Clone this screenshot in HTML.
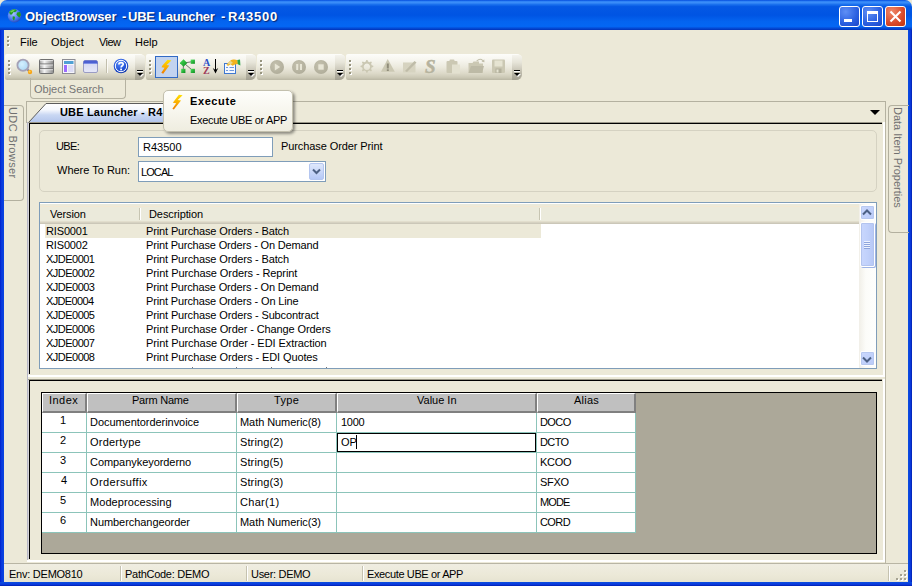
<!DOCTYPE html>
<html><head><meta charset="utf-8">
<style>
*{box-sizing:border-box;margin:0;padding:0}
html,body{width:912px;height:586px;overflow:hidden;background:#ece9d8;font-family:"Liberation Sans",sans-serif;font-size:11px;line-height:13px;color:#000}
#win{position:absolute;left:0;top:0;width:912px;height:586px;background:#ece9d8;overflow:hidden}
#win div,#win span,#win svg{position:absolute}
#title{left:0;top:0;width:912px;height:30px;background:linear-gradient(#0046da 0%,#2d80f5 4%,#3c8ef9 9%,#1a70ee 15%,#0558e4 22%,#0054e3 50%,#0464f0 72%,#0467f4 88%,#0450dc 93%,#0232b8 100%);border-radius:7px 7px 0 0}
#title .txt{left:25px;top:9px;font-weight:bold;font-size:13px;line-height:15px;color:#fff;text-shadow:1px 1px 1px #0a246a;white-space:nowrap}
.bl{left:0;top:30px;width:4px;height:556px;background:linear-gradient(90deg,#0020cc,#0838dc 35%,#0a45e2 100%)}
.br{left:908px;top:30px;width:4px;height:556px;background:linear-gradient(90deg,#0a4fe0,#0b3edc 50%,#0831d9 75%,#001ea0)}
.bb{left:0;top:582px;width:912px;height:4px;background:linear-gradient(#0a4fe0,#0b3edc 50%,#0831d9 75%,#001ea0)}
.cb{top:6px;width:21px;height:21px;border:1px solid #fff;border-radius:3px;background:radial-gradient(circle at 30% 25%,#5f8ff5,#2a5fe0 60%,#1c46c8)}
.cb.x{background:radial-gradient(circle at 30% 25%,#f0896a,#d8492a 60%,#c0350f)}
.menu span{top:36px;font-size:11px}
.tb{top:54px;height:26px;background:linear-gradient(#fdfdfa 0%,#f6f5ee 25%,#eceade 50%,#dcd9c8 75%,#ccc9b6 90%,#b9b6a3 100%);border-radius:2px 5px 5px 2px}
.grip{top:60px;width:3px;height:16px;background:linear-gradient(#8f8c7a,#8f8c7a) 0 0/2px 2px,linear-gradient(#fff,#fff) 1px 1px/2px 2px;background-repeat:repeat-y;background-size:2px 2px,2px 2px;background:none}
.grip:before{content:"";position:absolute;left:1px;top:1px;width:2px;height:100%;background:repeating-linear-gradient(#fff 0,#fff 2px,transparent 2px,transparent 4px)}
.grip:after{content:"";position:absolute;left:0;top:0;width:2px;height:100%;background:repeating-linear-gradient(#97947f 0,#97947f 2px,transparent 2px,transparent 4px)}
.ovf{top:55px;width:10px;height:25px;background:linear-gradient(#f5f4ee 0%,#e6e4d8 30%,#cfccbe 55%,#b3b0a1 80%,#a29f90 100%);border-radius:0 3px 6px 0}
.ovf:before{content:"";position:absolute;left:2px;top:15px;width:6px;height:2px;background:linear-gradient(#000 50%,#fff 50%)}
.ovf:after{content:"";position:absolute;left:2px;top:18px;border:3px solid transparent;border-top:3px solid #000;border-bottom:0;filter:drop-shadow(1px 1px 0 #fff)}
.lr{left:41px;width:500px;height:14px;white-space:nowrap}
.lr span{top:0;line-height:14px}
.lr .v{left:5px}.lr .d{left:105px}
.gr{left:42px;width:594px;height:20px}
.c{top:0;height:20px;background:#fff;border-right:1px solid #8cc4ba;border-bottom:1px solid #8cc4ba;line-height:19px;white-space:nowrap;padding-left:3px;font-size:11px}
.c0{left:0;width:45px;text-align:center;padding:0;line-height:17px}.c1{left:45px;width:150px}.c2{left:195px;width:100px}.c3{left:295px;width:200px}.c4{left:495px;width:99px}
.gh{top:393px;height:20px;background:#c0c0c0;border-top:1px solid #fff;border-left:1px solid #fff;border-right:2px solid #808080;border-bottom:2px solid #808080}
.st{top:568px;font-size:11px;line-height:13px;white-space:nowrap}
.vt{font-size:11px;color:#707070;white-space:nowrap;transform-origin:0 0;transform:rotate(90deg);line-height:13px}
.t{white-space:nowrap;font-size:11px;line-height:13px}
.ss{top:566px;width:2px;height:15px;background:linear-gradient(90deg,#c5c2b0 50%,#fff 50%)}
.sbb{width:15px;height:15px;border-radius:2px;background:linear-gradient(135deg,#cbd9fe,#b9caf8);border:1px solid #fff;box-shadow:0 0 0 1px #b7c8f0 inset}
</style></head><body>
<div id="win">
<div id="title">
<div class="cb" style="left:839px"><div style="left:4px;top:12px;width:8px;height:3px;background:#fff"></div></div>
<div class="cb" style="left:862px"><div style="left:4px;top:4px;width:11px;height:11px;border:1px solid #fff;border-top:3px solid #fff"></div></div>
<div class="cb x" style="left:885px"><svg style="left:3px;top:3px" width="13" height="13" viewBox="0 0 13 13"><path d="M1.500 1.500 L11.500 11.500 M11.500 1.500 L1.500 11.500" stroke="#fff" stroke-width="2.100"/></svg></div>
</div>
<div class="bl"></div><div class="br"></div><div class="bb"></div>
<div class="menu"><div class="grip" style="left:7px;top:36px;height:12px"></div></div>
<!-- toolbars -->
<div class="tb" style="left:5px;width:140px"></div><div class="grip" style="left:8px"></div><div class="ovf" style="left:135px"></div>
<div class="tb" style="left:146px;width:110px"></div><div class="grip" style="left:149px"></div><div class="ovf" style="left:246px"></div>
<div class="tb" style="left:257px;width:88px"></div><div class="grip" style="left:260px"></div><div class="ovf" style="left:335px"></div>
<div class="tb" style="left:346px;width:176px"></div><div class="grip" style="left:349px"></div><div class="ovf" style="left:512px"></div>
<!-- globe -->
<svg style="left:7px;top:8px" width="16" height="16" viewBox="0 0 16 16"><defs><radialGradient id="gl" cx="0.4" cy="0.35" r="0.7"><stop offset="0" stop-color="#a9c4ff"/><stop offset="0.6" stop-color="#4d7df0"/><stop offset="1" stop-color="#1f45b8"/></radialGradient></defs><circle cx="7.5" cy="7.7" r="6.8" fill="url(#gl)"/><path d="M2.2 4.2 C3.5 1.6 6.5 0.9 8.6 1.5 L10 2.8 L8.2 4 L6.2 4.3 L5 6.4 L3 6.6Z M10.2 4.6 L13 4 L14 7 L12.5 9.5 L10.8 8.2 L9.4 6.5Z M5.8 8.2 L8 8.8 L7.6 11.5 L6.6 12.6 L5.6 10.6Z" fill="#1f9a1f"/><path d="M3 4 C4 2.2 6.5 1.5 8 1.8 L6.5 3.4 L4.4 4.6Z" fill="#7fd86a" opacity=".8"/></svg>
<!-- magnifier -->
<svg style="left:15px;top:57px" width="19" height="18" viewBox="0 0 19 18"><defs><radialGradient id="mg" cx="0.4" cy="0.4" r="0.7"><stop offset="0" stop-color="#d4f0ff"/><stop offset="1" stop-color="#a8d4f2"/></radialGradient></defs><path d="M11.5 11.5 L14.5 14.5" stroke="#8a88a0" stroke-width="2.2"/><circle cx="8" cy="8.2" r="5.6" fill="url(#mg)" stroke="#a4a1b6" stroke-width="1.8"/><circle cx="15" cy="15" r="2.2" fill="#f7a416"/><circle cx="14.6" cy="14.5" r="1" fill="#ffd050"/></svg>
<!-- database -->
<svg style="left:39px;top:59px" width="16" height="15" viewBox="0 0 16 15"><defs><linearGradient id="db" x1="0" x2="1" y1="0" y2="0"><stop offset="0" stop-color="#9a9a9a"/><stop offset="0.35" stop-color="#f4f4f4"/><stop offset="0.6" stop-color="#c8c8c8"/><stop offset="1" stop-color="#8a8a8a"/></linearGradient></defs><rect x="0.5" y="0.5" width="14" height="14" rx="1" fill="url(#db)" stroke="#707070"/><path d="M1 5 H14 M1 9.7 H14" stroke="#6e6e6e" stroke-width="1"/><path d="M1 1.6 H14 M1 6 H14 M1 10.7 H14" stroke="#fafafa" stroke-width="1" opacity=".7"/></svg>
<!-- form -->
<svg style="left:62px;top:59px" width="14" height="15" viewBox="0 0 14 15"><rect x="0.5" y="0.5" width="12.5" height="14" fill="#f6f6fb" stroke="#8c8c94"/><rect x="2" y="2" width="9.5" height="3" fill="#4fa0d4"/><rect x="2" y="6" width="3" height="7" fill="#9b6bff"/><rect x="6" y="6" width="5.5" height="7" fill="#dcdcf6"/></svg>
<!-- window -->
<svg style="left:83px;top:60px" width="16" height="13" viewBox="0 0 16 13"><defs><linearGradient id="wn" x1="0" x2="0" y1="0" y2="1"><stop offset="0" stop-color="#d0d4f2"/><stop offset="1" stop-color="#e6e8f8"/></linearGradient></defs><rect x="0.5" y="0.5" width="14" height="12" rx="1.5" fill="url(#wn)" stroke="#9a9cc4"/><path d="M0.5 4 V2 Q0.5 0.5 2 0.5 H13 Q14.5 0.5 14.5 2 V4Z" fill="#4c60d2"/><path d="M1 3.5 H14" stroke="#7c8ee6" stroke-width="1"/></svg>
<div style="left:106px;top:59px;width:1px;height:14px;background:#c2bfad"></div><div style="left:107px;top:59px;width:1px;height:14px;background:#fbfaf6"></div>
<!-- help -->
<svg style="left:113px;top:58px" width="16" height="16" viewBox="0 0 16 16"><defs><radialGradient id="hp" cx="0.4" cy="0.3" r="0.8"><stop offset="0" stop-color="#5a8cf8"/><stop offset="0.6" stop-color="#1f4fd6"/><stop offset="1" stop-color="#12349c"/></radialGradient></defs><circle cx="8" cy="8" r="7.3" fill="url(#hp)"/><circle cx="8" cy="8" r="5.7" fill="none" stroke="#fff" stroke-width="1"/><path d="M5.9 6.4 C5.9 4.2 10.2 4.1 10.2 6.3 C10.2 7.8 8.1 7.7 8.1 9.6" fill="none" stroke="#fff" stroke-width="1.7"/><rect x="7.2" y="10.6" width="1.8" height="1.7" fill="#fff"/></svg>
<!-- execute selected -->
<div style="left:155px;top:56px;width:23px;height:22px;background:#c2d3ef;border:1px solid #316ac5"></div>
<svg style="left:160px;top:59px" width="13" height="16" viewBox="0 0 13 16"><defs><linearGradient id="lt" x1="0" x2="0" y1="0" y2="1"><stop offset="0" stop-color="#ffe000"/><stop offset="0.5" stop-color="#fbb000"/><stop offset="1" stop-color="#ee7a00"/></linearGradient></defs><path d="M7.600 0.800 L11.400 1.400 L6.600 6 L9.300 6.600 L3.200 14.800 L1.300 13.800 L4.600 8.800 L1.500 8.200 L2.400 6.600 Z" fill="url(#lt)"/></svg>
<!-- tree -->
<svg style="left:180px;top:58px" width="17" height="17" viewBox="0 0 17 17"><defs><linearGradient id="gr" x1="0" y1="0" x2="1" y2="1"><stop offset="0" stop-color="#4be25a"/><stop offset="1" stop-color="#0c8a1e"/></linearGradient></defs><path d="M4 5 L12.500 3.600 M3.500 5 L3.200 13 M5 6 L11.500 11.500" stroke="#707070" stroke-width="1"/><path d="M3.500 1.200 L7.300 5 L3.500 8.800 L-0.300 5Z" fill="url(#gr)"/><rect x="10.700" y="1.600" width="4.200" height="4.200" fill="url(#gr)"/><rect x="1.200" y="10.800" width="4.200" height="4.200" fill="url(#gr)"/><rect x="10.700" y="10.800" width="4.200" height="4.200" fill="url(#gr)"/></svg>
<!-- sort AZ -->
<span style="left:203px;top:58px;font-family:'Liberation Serif',serif;font-weight:bold;font-size:10px;line-height:10px;color:#2a50c8">A</span>
<span style="left:203px;top:66px;font-family:'Liberation Serif',serif;font-weight:bold;font-size:10px;line-height:10px;color:#a03a5a">Z</span>
<svg style="left:212px;top:58px" width="8" height="17" viewBox="0 0 8 17"><path d="M3.5 1 V12" stroke="#000" stroke-width="1"/><path d="M0.8 10 L3.5 15.5 L6.2 10 L3.5 12Z" fill="#000"/></svg>
<!-- properties -->
<svg style="left:223px;top:58px" width="19" height="17" viewBox="0 0 19 17"><rect x="1.5" y="5.5" width="11" height="10" fill="#f4f8ff" stroke="#3f78d0"/><path d="M3 9.5 H5 M6.5 9.5 H11 M3 12.5 H5 M6.5 12.5 H11" stroke="#6f98dc" stroke-width="1.2"/><path d="M3.5 6.5 L7.5 2.5 C9 1.5 12 1.2 14.5 2.2 L15 6 L12 6.6 L9.5 7.8 L7.6 6.2 L5 8Z" fill="#f2b21a"/><path d="M4 6.4 L7.6 2.8 L10 5 L7.8 6Z" fill="#e8d890"/><path d="M14.3 2 L17 1.4 L17.4 7.6 L14.8 6.2Z" fill="#2fa84a"/></svg>
<!-- disabled play/pause/stop -->
<svg style="left:269px;top:59px" width="60" height="16" viewBox="0 0 60 16"><defs><radialGradient id="dg" cx="0.4" cy="0.35" r="0.75"><stop offset="0" stop-color="#c4c1ae"/><stop offset="1" stop-color="#aeab98"/></radialGradient></defs><circle cx="8" cy="8" r="7" fill="url(#dg)"/><circle cx="30" cy="8" r="7" fill="url(#dg)"/><circle cx="52" cy="8" r="7" fill="url(#dg)"/><path d="M5.8 4.6 L11.2 8 L5.8 11.4Z" fill="#e8e6d6"/><rect x="27.2" y="5" width="2" height="6" fill="#e8e6d6"/><rect x="31" y="5" width="2" height="6" fill="#e8e6d6"/><rect x="49.3" y="5.3" width="5.4" height="5.4" fill="#e8e6d6"/></svg>
<!-- disabled toolbar 4 -->
<svg style="left:358px;top:58px" width="150" height="17" viewBox="0 0 150 17"><g fill="#cbc8b3">
<path d="M8.3 2 l1.2 0 l.5 1.6 l1.5 .6 l1.5 -.8 l.9 .9 l-.8 1.5 l.6 1.5 l1.6 .5 v1.2 l-1.6 .5 l-.6 1.5 l.8 1.5 l-.9 .9 l-1.5 -.8 l-1.5 .6 l-.5 1.6 h-1.2 l-.5 -1.6 l-1.5 -.6 l-1.5 .8 l-.9 -.9 l.8 -1.5 l-.6 -1.5 l-1.6 -.5 v-1.2 l1.6 -.5 l.6 -1.5 l-.8 -1.5 l.9 -.9 l1.5 .8 l1.5 -.6Z M8.9 5.6 a3.2 3.2 0 1 0 .01 0Z" fill-rule="evenodd"/>
<path d="M29.7 1 L36.8 13.8 H23Z"/>
<rect x="45" y="4.5" width="12.5" height="10" fill="#d6d3c0"/><path d="M47 13 L56.5 3 L58.5 4.5 L49 14Z" fill="#bfbca8"/>
<rect x="88.500" y="3" width="11" height="12" rx="1"/><rect x="91.500" y="1.600" width="5" height="2.500" rx="1"/><rect x="94" y="6.500" width="8" height="9" fill="#e3e1d0"/>
<path d="M110.500 5 h4 l1 -1.500 h5.500 v2 h4 v9.500 h-14.500Z"/><path d="M113 8 h13 l-2 7 h-13.500Z" fill="#bdbaa6"/><path d="M119 3.500 q3 -3 5.500 -.5 l-1 .8 3 .5 -.3 -3 -.9 .9 q-3.500 -3 -7 .6Z" fill="#c2bfab"/>
<rect x="134" y="1.500" width="13" height="13.500" rx="1"/><rect x="136.500" y="2.500" width="8" height="6" fill="#e6e4d2"/><rect x="137.500" y="10.500" width="6" height="4.500" fill="#b3b09c"/><rect x="138.500" y="11.500" width="2" height="3" fill="#e6e4d2"/>
</g><rect x="28.800" y="5.500" width="2" height="5" fill="#8f8c79"/><rect x="28.800" y="11.300" width="2" height="1.700" fill="#8f8c79"/>
<text x="67" y="14.800" font-family="Liberation Serif" font-weight="bold" font-style="italic" font-size="19" fill="#b6b39e" stroke="#b6b39e" stroke-width=".5">S</text></svg>
<!-- tooltip icon drawn later -->

<!-- object search -->
<div style="left:30px;top:78px;width:96px;height:21px;border:1px solid #b5b2a1;border-top:0;border-radius:0 0 4px 4px"></div>

<!-- side tabs -->
<div style="left:4px;top:105px;width:20px;height:96px;border:1px solid #b3b09f;border-left:0;border-radius:0 4px 4px 0"></div>
<div class="vt" style="left:19px;top:107px;letter-spacing:.4px">UDC Browser</div>
<div style="left:888px;top:105px;width:21px;height:128px;border:1px solid #b3b09f;border-right:0;border-radius:4px 0 0 4px"></div>
<div class="vt" style="left:904px;top:107px">Data Item Properties</div>
<!-- upper panel -->
<div style="left:26px;top:101px;width:860px;height:22px;border:1px solid #b4b1a0;border-bottom:0"></div>
<div style="left:885px;top:122px;width:1px;height:441px;background:#b9b6a5"></div>
<div style="left:883px;top:122px;width:2px;height:255px;background:#fff"></div><div style="left:27px;top:375px;width:858px;height:2px;background:#fff"></div>
<div style="left:27px;top:122px;width:1px;height:438px;background:#b6b6c6"></div>
<div style="left:28px;top:122px;width:854px;height:252px;border-left:2px solid #000;border-top:2px solid #000;border-left-color:#6d6d6d #000;"></div>
<div style="left:28px;top:122px;width:854px;height:1px;background:#9a9788"></div><div style="left:28px;top:123px;width:1px;height:251px;background:#d6d5d8"></div>
<svg style="left:28px;top:102px" width="140" height="21"><defs><linearGradient id="tg" x1="0" y1="0" x2="0" y2="1"><stop offset="0" stop-color="#fff"/><stop offset="0.35" stop-color="#f4f7fd"/><stop offset="0.62" stop-color="#c9d7f3"/><stop offset="1" stop-color="#b4c6ec"/></linearGradient></defs><path d="M1 20 L18 1.5 L140 1.5 L140 20Z" fill="url(#tg)"/><path d="M1 20 L18 1.5 L140 1.5" fill="none" stroke="#5c5c5c" stroke-width="1"/></svg>

<div style="left:870px;top:110px;border:5px solid transparent;border-top:5px solid #000;border-bottom:0"></div>
<!-- group box -->
<div style="left:39px;top:130px;width:838px;height:62px;border:1px solid #d5d2c2;border-radius:5px"></div>

<div style="left:138px;top:137px;width:135px;height:20px;background:#fff;border:1px solid #7f9db9"></div>



<div style="left:138px;top:161px;width:188px;height:21px;background:#fff;border:1px solid #7f9db9"></div>

<div style="left:309px;top:163px;width:15px;height:17px;border-radius:2px;background:linear-gradient(#dfe8fc,#b5c8f6);border:1px solid #b4c6f0"></div>
<svg style="left:312px;top:168px" width="9" height="7"><path d="M1 1.5 L4.5 5 L8 1.5" fill="none" stroke="#4d6185" stroke-width="2"/></svg>
<!-- list -->
<div style="left:39px;top:202px;width:838px;height:167px;background:#fff;border:1px solid #7f9db9;overflow:hidden"></div>
<div style="left:40px;top:203px;width:819px;height:21px;background:linear-gradient(#fff 0,#fff 1px,#ebeadb 1px,#ebeadb 18px,#e2decd 18px,#e2decd 19px,#d6d2c2 19px,#d6d2c2 20px,#cbc7b8 20px)"></div>
<!-- peach --><div style="left:40px;top:206px;width:819px;height:1px;background:#f3e8d2"></div>
<div style="left:139px;top:208px;width:1px;height:12px;background:#c7c5b2"></div><div style="left:140px;top:208px;width:1px;height:12px;background:#fff"></div>
<div style="left:539px;top:208px;width:1px;height:12px;background:#c7c5b2"></div><div style="left:540px;top:208px;width:1px;height:12px;background:#fff"></div>

<div style="left:45px;top:224px;width:496px;height:14px;background:#ece9d8"></div>
<!-- partial --><div style="left:192px;top:367px;width:1px;height:1px;background:#777"></div><div style="left:236px;top:367px;width:1px;height:1px;background:#777"></div><div style="left:271px;top:367px;width:1px;height:1px;background:#777"></div><div style="left:326px;top:367px;width:1px;height:1px;background:#777"></div>
<!-- list scrollbar -->
<div style="left:859px;top:204px;width:17px;height:164px;background:linear-gradient(90deg,#f1efe8,#fcfcf9 40%,#fefefd)"></div>
<div class="sbb" style="left:860px;top:205px"></div><div class="sbb" style="left:860px;top:351px"></div>
<svg style="left:862px;top:209px" width="10" height="7" viewBox="0 0 10 7"><path d="M1 5.500 L5 1.500 L9 5.500" fill="none" stroke="#4d6185" stroke-width="2"/></svg>
<svg style="left:862px;top:356px" width="10" height="7" viewBox="0 0 10 7"><path d="M1 1.500 L5 5.500 L9 1.500" fill="none" stroke="#4d6185" stroke-width="2"/></svg>
<div style="left:860px;top:222px;width:15px;height:45px;border-radius:2px;background:linear-gradient(90deg,#c9d7fd,#c1d1fb 50%,#b6c7f5);border:1px solid #fff;box-shadow:0 0 0 1px #b3c4ee inset, 1px 1px 0 #9db3e6"></div>
<div style="left:864px;top:241px;width:6px;height:8px;background:repeating-linear-gradient(#eef3fe 0,#eef3fe 1px,#8ea5dc 1px,#8ea5dc 2px)"></div>
<!-- splitter + lower panel -->
<div style="left:883px;top:379px;width:2px;height:183px;background:#fff"></div><div style="left:27px;top:560px;width:858px;height:2px;background:#fff"></div>
<div style="left:28px;top:379px;width:854px;height:180px;border-left:2px solid #000;border-top:2px solid #000"></div>
<div style="left:28px;top:379px;width:854px;height:1px;background:#9a9788"></div><div style="left:28px;top:380px;width:1px;height:179px;background:#d6d5d8"></div>
<div style="left:41px;top:392px;width:836px;height:162px;background:#aca899;border:1px solid #000"></div>
<div class="gh" style="left:42px;width:45px"></div><div class="gh" style="left:87px;width:150px"></div><div class="gh" style="left:237px;width:100px"></div><div class="gh" style="left:337px;width:200px"></div><div class="gh" style="left:537px;width:99px"></div>
<div class="gr" style="top:413px"><div class="c c0"></div><div class="c c1"></div><div class="c c2"></div><div class="c c3"></div><div class="c c4"></div></div>
<div class="gr" style="top:433px"><div class="c c0"></div><div class="c c1"></div><div class="c c2"></div><div class="c c3"></div><div class="c c4"></div></div>
<div class="gr" style="top:453px"><div class="c c0"></div><div class="c c1"></div><div class="c c2"></div><div class="c c3"></div><div class="c c4"></div></div>
<div class="gr" style="top:473px"><div class="c c0"></div><div class="c c1"></div><div class="c c2"></div><div class="c c3"></div><div class="c c4"></div></div>
<div class="gr" style="top:493px"><div class="c c0"></div><div class="c c1"></div><div class="c c2"></div><div class="c c3"></div><div class="c c4"></div></div>
<div class="gr" style="top:513px"><div class="c c0"></div><div class="c c1"></div><div class="c c2"></div><div class="c c3"></div><div class="c c4"></div></div>

<div style="left:337px;top:433px;width:199px;height:19px;border:1px solid #000;background:#fff"></div>
<div style="left:356px;top:435px;width:1px;height:14px;background:#000"></div>
<!-- status -->
<div style="left:4px;top:563px;width:904px;height:1px;background:#b8b5a4"></div>
<div style="left:4px;top:564px;width:904px;height:18px;background:linear-gradient(#efede1,#ece9d8 60%,#e6e3d1)"></div>

<div class="ss" style="left:120px"></div><div class="ss" style="left:246px"></div><div class="ss" style="left:362px"></div><div class="ss" style="left:888px"></div>
<svg style="left:895px;top:569px" width="12" height="12" viewBox="0 0 12 12"><g fill="#fff"><rect x="10" y="2" width="2" height="2"/><rect x="6" y="6" width="2" height="2"/><rect x="10" y="6" width="2" height="2"/><rect x="2" y="10" width="2" height="2"/><rect x="6" y="10" width="2" height="2"/><rect x="10" y="10" width="2" height="2"/></g><g fill="#a5a291"><rect x="9" y="1" width="2" height="2"/><rect x="5" y="5" width="2" height="2"/><rect x="9" y="5" width="2" height="2"/><rect x="1" y="9" width="2" height="2"/><rect x="5" y="9" width="2" height="2"/><rect x="9" y="9" width="2" height="2"/></g></svg>
<!-- tooltip -->
<div style="left:163px;top:90px;width:130px;height:42px;background:linear-gradient(#fefefb,#f7f6ee 50%,#efede0);border:1px solid #c3c0ae;border-radius:5px;box-shadow:2px 2px 3px rgba(0,0,0,.4)"></div>


<svg style="left:171px;top:94px;z-index:5" width="13" height="16" viewBox="0 0 12 15"><path d="M7.300 0.800 L10.800 1.200 L6.200 5.600 L9.300 6 L2.600 14.600 L1.200 13.800 L4.800 8.600 L1.600 8.200 Z" fill="url(#lt)"/></svg>

<span class="t" id="t0" style="left:25.00px;top:9px;letter-spacing:-0.075px;font-weight:bold;font-size:13px;line-height:15px;color:#fff;text-shadow:1px 1px 1px #0a246a;">ObjectBrowser</span>
<span class="t" id="t1" style="left:122.00px;top:9px;letter-spacing:0.000px;font-weight:bold;font-size:13px;line-height:15px;color:#fff;text-shadow:1px 1px 1px #0a246a;">-</span>
<span class="t" id="t2" style="left:128.00px;top:9px;letter-spacing:-0.245px;font-weight:bold;font-size:13px;line-height:15px;color:#fff;text-shadow:1px 1px 1px #0a246a;">UBE Launcher</span>
<span class="t" id="t3" style="left:221.00px;top:9px;letter-spacing:0.000px;font-weight:bold;font-size:13px;line-height:15px;color:#fff;text-shadow:1px 1px 1px #0a246a;">-</span>
<span class="t" id="t4" style="left:228.00px;top:9px;letter-spacing:0.720px;font-weight:bold;font-size:13px;line-height:15px;color:#fff;text-shadow:1px 1px 1px #0a246a;">R43500</span>
<span class="t" id="t5" style="left:20.00px;top:36px;letter-spacing:0.000px;">File</span>
<span class="t" id="t6" style="left:51.00px;top:36px;letter-spacing:0.180px;">Object</span>
<span class="t" id="t7" style="left:99.00px;top:36px;letter-spacing:-0.600px;">View</span>
<span class="t" id="t8" style="left:135.00px;top:36px;letter-spacing:0.000px;">Help</span>
<span class="t" id="t9" style="left:34.00px;top:83px;letter-spacing:0.000px;color:#757575;">Object Search</span>
<span class="t" id="t10" style="left:60.00px;top:106px;letter-spacing:0.169px;font-weight:bold;">UBE Launcher - R4</span>
<span class="t" id="t11" style="left:56.00px;top:140px;letter-spacing:-0.600px;">UBE:</span>
<span class="t" id="t12" style="left:143.00px;top:141px;letter-spacing:0.000px;">R43500</span>
<span class="t" id="t13" style="left:281.00px;top:140px;letter-spacing:-0.095px;">Purchase Order Print</span>
<span class="t" id="t14" style="left:57.00px;top:164px;letter-spacing:0.000px;">Where To Run:</span>
<span class="t" id="t15" style="left:141.00px;top:166px;letter-spacing:-0.900px;">LOCAL</span>
<span class="t" id="t16" style="left:50.00px;top:208px;letter-spacing:-0.150px;">Version</span>
<span class="t" id="t17" style="left:149.00px;top:208px;letter-spacing:-0.090px;">Description</span>
<span class="t" id="t18" style="left:46.00px;top:224px;letter-spacing:-0.150px;line-height:14px;">RIS0001</span>
<span class="t" id="t19" style="left:146.00px;top:224px;letter-spacing:-0.129px;line-height:14px;">Print Purchase Orders - Batch</span>
<span class="t" id="t20" style="left:46.00px;top:238px;letter-spacing:-0.150px;line-height:14px;">RIS0002</span>
<span class="t" id="t21" style="left:146.00px;top:238px;letter-spacing:-0.169px;line-height:14px;">Print Purchase Orders - On Demand</span>
<span class="t" id="t22" style="left:46.00px;top:252px;letter-spacing:-0.514px;line-height:14px;">XJDE0001</span>
<span class="t" id="t23" style="left:146.00px;top:252px;letter-spacing:-0.129px;line-height:14px;">Print Purchase Orders - Batch</span>
<span class="t" id="t24" style="left:46.00px;top:266px;letter-spacing:-0.514px;line-height:14px;">XJDE0002</span>
<span class="t" id="t25" style="left:146.00px;top:266px;letter-spacing:-0.090px;line-height:14px;">Print Purchase Orders - Reprint</span>
<span class="t" id="t26" style="left:46.00px;top:280px;letter-spacing:-0.514px;line-height:14px;">XJDE0003</span>
<span class="t" id="t27" style="left:146.00px;top:280px;letter-spacing:-0.169px;line-height:14px;">Print Purchase Orders - On Demand</span>
<span class="t" id="t28" style="left:46.00px;top:294px;letter-spacing:-0.643px;line-height:14px;">XJDE0004</span>
<span class="t" id="t29" style="left:146.00px;top:294px;letter-spacing:-0.150px;line-height:14px;">Print Purchase Orders - On Line</span>
<span class="t" id="t30" style="left:46.00px;top:308px;letter-spacing:-0.514px;line-height:14px;">XJDE0005</span>
<span class="t" id="t31" style="left:146.00px;top:308px;letter-spacing:-0.132px;line-height:14px;">Print Purchase Orders - Subcontract</span>
<span class="t" id="t32" style="left:46.00px;top:322px;letter-spacing:-0.514px;line-height:14px;">XJDE0006</span>
<span class="t" id="t33" style="left:146.00px;top:322px;letter-spacing:-0.103px;line-height:14px;">Print Purchase Order - Change Orders</span>
<span class="t" id="t34" style="left:46.00px;top:336px;letter-spacing:-0.514px;line-height:14px;">XJDE0007</span>
<span class="t" id="t35" style="left:146.00px;top:336px;letter-spacing:-0.075px;line-height:14px;">Print Purchase Order - EDI Extraction</span>
<span class="t" id="t36" style="left:46.00px;top:350px;letter-spacing:-0.514px;line-height:14px;">XJDE0008</span>
<span class="t" id="t37" style="left:146.00px;top:350px;letter-spacing:-0.109px;line-height:14px;">Print Purchase Orders - EDI Quotes</span>
<span class="t" id="t38" style="left:49.00px;top:394px;letter-spacing:0.450px;">Index</span>
<span class="t" id="t39" style="left:132.00px;top:394px;letter-spacing:-0.225px;">Parm Name</span>
<span class="t" id="t40" style="left:274.00px;top:394px;letter-spacing:0.300px;">Type</span>
<span class="t" id="t41" style="left:417.00px;top:394px;letter-spacing:0.000px;">Value In</span>
<span class="t" id="t42" style="left:574.00px;top:394px;letter-spacing:0.225px;">Alias</span>
<span class="t" id="t43" style="left:60.00px;top:414px;letter-spacing:0.000px;">1</span>
<span class="t" id="t44" style="left:90.00px;top:416px;letter-spacing:-0.047px;">Documentorderinvoice</span>
<span class="t" id="t45" style="left:240.00px;top:416px;letter-spacing:-0.064px;">Math Numeric(8)</span>
<span class="t" id="t46" style="left:341.00px;top:416px;letter-spacing:-0.300px;">1000</span>
<span class="t" id="t47" style="left:540.00px;top:416px;letter-spacing:-0.600px;">DOCO</span>
<span class="t" id="t48" style="left:60.00px;top:434px;letter-spacing:0.000px;">2</span>
<span class="t" id="t49" style="left:90.00px;top:436px;letter-spacing:0.225px;">Ordertype</span>
<span class="t" id="t50" style="left:240.00px;top:436px;letter-spacing:0.113px;">String(2)</span>
<span class="t" id="t51" style="left:540.00px;top:436px;letter-spacing:-0.600px;">DCTO</span>
<span class="t" id="t52" style="left:60.00px;top:454px;letter-spacing:0.000px;">3</span>
<span class="t" id="t53" style="left:90.00px;top:456px;letter-spacing:-0.056px;">Companykeyorderno</span>
<span class="t" id="t54" style="left:240.00px;top:456px;letter-spacing:0.113px;">String(5)</span>
<span class="t" id="t55" style="left:540.00px;top:456px;letter-spacing:-0.300px;">KCOO</span>
<span class="t" id="t56" style="left:61.00px;top:474px;letter-spacing:0.000px;">4</span>
<span class="t" id="t57" style="left:90.00px;top:476px;letter-spacing:0.360px;">Ordersuffix</span>
<span class="t" id="t58" style="left:240.00px;top:476px;letter-spacing:0.113px;">String(3)</span>
<span class="t" id="t59" style="left:540.00px;top:476px;letter-spacing:-0.300px;">SFXO</span>
<span class="t" id="t60" style="left:60.00px;top:494px;letter-spacing:0.000px;">5</span>
<span class="t" id="t61" style="left:90.00px;top:496px;letter-spacing:0.069px;">Modeprocessing</span>
<span class="t" id="t62" style="left:240.00px;top:496px;letter-spacing:0.300px;">Char(1)</span>
<span class="t" id="t63" style="left:540.00px;top:496px;letter-spacing:-0.900px;">MODE</span>
<span class="t" id="t64" style="left:60.00px;top:514px;letter-spacing:0.000px;">6</span>
<span class="t" id="t65" style="left:90.00px;top:516px;letter-spacing:-0.056px;">Numberchangeorder</span>
<span class="t" id="t66" style="left:240.00px;top:516px;letter-spacing:-0.064px;">Math Numeric(3)</span>
<span class="t" id="t67" style="left:540.00px;top:516px;letter-spacing:-0.600px;">CORD</span>
<span class="t" id="t68" style="left:341.00px;top:436px;letter-spacing:0.000px;">OP</span>
<span class="t" id="t69" style="left:9.00px;top:568px;letter-spacing:-0.245px;">Env: DEMO810</span>
<span class="t" id="t70" style="left:125.00px;top:568px;letter-spacing:-0.277px;">PathCode: DEMO</span>
<span class="t" id="t71" style="left:251.00px;top:568px;letter-spacing:-0.300px;">User: DEMO</span>
<span class="t" id="t72" style="left:367.00px;top:568px;letter-spacing:-0.371px;">Execute UBE or APP</span>
<span class="t" id="t73" style="left:190.00px;top:95px;letter-spacing:0.600px;font-weight:bold;">Execute</span>
<span class="t" id="t74" style="left:190.00px;top:114px;letter-spacing:-0.318px;">Execute UBE or APP</span>

</div>
</body></html>
